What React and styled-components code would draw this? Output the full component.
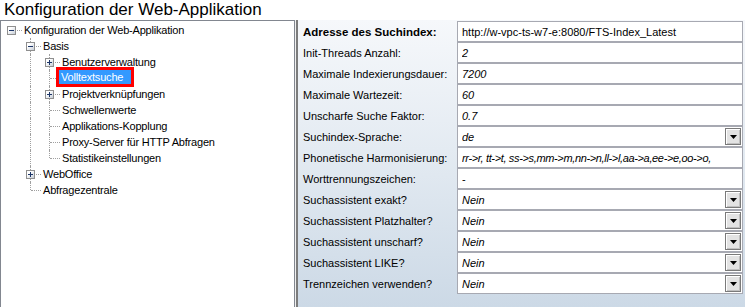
import React from "react";
import styled, { createGlobalStyle } from "styled-components";

const GlobalStyle = createGlobalStyle`
  body {
    margin: 0;
    background: #ffffff;
    font-family: "Liberation Sans", Arial, sans-serif;
  }
`;

const Page = styled.div`
  width: 745px;
  height: 307px;
  display: flex;
  flex-direction: column;
  overflow: hidden;
  background: #ffffff;
`;

const Title = styled.h1`
  margin: 0;
  height: 20px;
  padding-left: 4px;
  font-size: 17px;
  line-height: 19px;
  font-weight: normal;
  color: #000;
  white-space: nowrap;
`;

const Main = styled.div`
  flex: 1;
  display: flex;
  min-height: 0;
`;

const TreePanel = styled.div`
  width: 295px;
  box-sizing: border-box;
  border: 1px solid #828790;
  border-bottom: none;
  background: #ffffff;
  padding-top: 1px;
  font-size: 11px;
  letter-spacing: -0.2px;
`;

const Splitter = styled.div`
  width: 3px;
  border-left: 1px solid #f0f0f0;
  box-sizing: border-box;
  background: #7c7c7c;
`;

const PropPanel = styled.div`
  flex: 1;
  background: linear-gradient(to bottom, #f6f8fb 0%, #e4ebf2 45%, #ccd9e6 100%);
  padding-right: 2px;
  padding-top: 1px;
  display: grid;
  grid-template-columns: 159px 1fr;
  grid-auto-rows: 21px;
  align-content: start;
  font-size: 11px;
`;

/* ---------- tree ---------- */

const TreeRow = styled.div`
  display: flex;
  height: 16px;
  align-items: stretch;
  padding-left: 1px;
`;

const Guide = styled.div`
  width: 19px;
  flex: none;
  position: relative;
  &::before {
    content: "";
    display: ${({ $line }) => ($line ? "block" : "none")};
    position: absolute;
    left: 9px;
    top: 0;
    bottom: 0;
    border-left: 1px dotted #a0a0a0;
  }
`;

const Connector = styled.div`
  width: 19px;
  flex: none;
  position: relative;
  &::before {
    content: "";
    display: ${({ $up }) => ($up ? "block" : "none")};
    position: absolute;
    left: 9px;
    top: 0;
    height: ${({ $down }) => ($down ? "16px" : "8px")};
    border-left: 1px dotted #a0a0a0;
  }
  &::after {
    content: "";
    position: absolute;
    left: 10px;
    top: 8px;
    width: 10px;
    border-top: 1px dotted #a0a0a0;
  }
`;

const ExpandBox = styled.span`
  position: absolute;
  left: 5px;
  top: 4px;
  width: 9px;
  height: 9px;
  box-sizing: border-box;
  border: 1px solid #8f8f8f;
  background: linear-gradient(to bottom right, #ffffff 30%, #c6cdd6 100%);
  z-index: 1;
  &::before {
    content: "";
    position: absolute;
    left: 1px;
    top: 3px;
    width: 5px;
    height: 1px;
    background: #1c3568;
  }
  &::after {
    content: "";
    display: ${({ $open }) => ($open ? "none" : "block")};
    position: absolute;
    left: 3px;
    top: 1px;
    width: 1px;
    height: 5px;
    background: #1c3568;
  }
`;

const NodeLabel = styled.span`
  margin-left: 3px;
  line-height: 16px;
  white-space: nowrap;
  color: #000;
`;

const SelectedLabel = styled.span`
  position: relative;
  z-index: 2;
  margin-left: -3px;
  margin-top: -3px;
  height: 20px;
  box-sizing: border-box;
  border: 3px solid #ff0000;
  background: #3399ff;
  color: #ffffff;
  padding: 0 8px 0 2px;
  line-height: 14px;
  white-space: nowrap;
`;

/* ---------- property grid ---------- */

const Label = styled.div`
  padding-left: 5px;
  display: flex;
  align-items: center;
  white-space: nowrap;
  color: #000;
  font-weight: ${({ $bold }) => ($bold ? "bold" : "normal")};
  font-size: ${({ $bold }) => ($bold ? "11.5px" : "11px")};
`;

const ValueCell = styled.div`
  box-sizing: border-box;
  border: 1px solid #a7a9b2;
  background: #ffffff;
  display: flex;
  align-items: center;
  padding-left: 4px;
  padding-right: 1px;
  overflow: hidden;
  white-space: nowrap;
`;

const ValueText = styled.span`
  flex: 1;
  overflow: hidden;
  font-style: ${({ $italic }) => ($italic ? "italic" : "normal")};
  letter-spacing: ${({ $tight }) => ($tight ? "-0.35px" : "normal")};
  color: #000;
`;

const DropButton = styled.span`
  flex: none;
  width: 16px;
  height: 17px;
  box-sizing: border-box;
  border: 1px solid #7a7a7a;
  box-shadow: inset 1px 1px 0 #ffffff, inset -1px -1px 0 #c0c0c0;
  background: #e3e3e3;
  display: flex;
  align-items: center;
  justify-content: center;
`;

const tree = [
  { text: "Konfiguration der Web-Applikation", box: "open", guides: [], up: false, down: false },
  { text: "Basis", box: "open", guides: [false], up: true, down: true },
  { text: "Benutzerverwaltung", box: "closed", guides: [false, true], up: true, down: true },
  { text: "Volltextsuche", selected: true, guides: [false, true], up: true, down: true },
  { text: "Projektverknüpfungen", box: "closed", guides: [false, true], up: true, down: true },
  { text: "Schwellenwerte", guides: [false, true], up: true, down: true },
  { text: "Applikations-Kopplung", guides: [false, true], up: true, down: true },
  { text: "Proxy-Server für HTTP Abfragen", guides: [false, true], up: true, down: true },
  { text: "Statistikeinstellungen", guides: [false, true], up: true, down: false },
  { text: "WebOffice", box: "closed", guides: [false], up: true, down: true },
  { text: "Abfragezentrale", guides: [false], up: true, down: false },
];

const props = [
  { label: "Adresse des Suchindex:", value: "http://w-vpc-ts-w7-e:8080/FTS-Index_Latest", bold: true },
  { label: "Init-Threads Anzahl:", value: "2", italic: true },
  { label: "Maximale Indexierungsdauer:", value: "7200", italic: true },
  { label: "Maximale Wartezeit:", value: "60", italic: true },
  { label: "Unscharfe Suche Faktor:", value: "0.7", italic: true },
  { label: "Suchindex-Sprache:", value: "de", italic: true, drop: true },
  {
    label: "Phonetische Harmonisierung:",
    value: "rr->r, tt->t, ss->s,mm->m,nn->n,ll->l,aa->a,ee->e,oo->o,",
    italic: true,
    tight: true,
  },
  { label: "Worttrennungszeichen:", value: "-" },
  { label: "Suchassistent exakt?", value: "Nein", italic: true, drop: true },
  { label: "Suchassistent Platzhalter?", value: "Nein", italic: true, drop: true },
  { label: "Suchassistent unscharf?", value: "Nein", italic: true, drop: true },
  { label: "Suchassistent LIKE?", value: "Nein", italic: true, drop: true },
  { label: "Trennzeichen verwenden?", value: "Nein", italic: true, drop: true },
];

const Arrow = () => (
  <svg width="7" height="4" viewBox="0 0 7 4">
    <path d="M0 0H7L3.5 4Z" fill="#000" />
  </svg>
);

export default function App() {
  return (
    <Page>
      <GlobalStyle />
      <Title>Konfiguration der Web-Applikation</Title>
      <Main>
        <TreePanel>
          {tree.map((n, i) => (
            <TreeRow key={i}>
              {n.guides.map((g, j) => (
                <Guide key={j} $line={g} />
              ))}
              <Connector $up={n.up} $down={n.down}>
                {n.box && <ExpandBox $open={n.box === "open"} />}
              </Connector>
              {n.selected ? (
                <SelectedLabel>{n.text}</SelectedLabel>
              ) : (
                <NodeLabel>{n.text}</NodeLabel>
              )}
            </TreeRow>
          ))}
        </TreePanel>
        <Splitter />
        <PropPanel>
          {props.map((p, i) => (
            <React.Fragment key={i}>
              <Label $bold={p.bold}>{p.label}</Label>
              <ValueCell>
                <ValueText $italic={p.italic} $tight={p.tight}>
                  {p.value}
                </ValueText>
                {p.drop && (
                  <DropButton>
                    <Arrow />
                  </DropButton>
                )}
              </ValueCell>
            </React.Fragment>
          ))}
        </PropPanel>
      </Main>
    </Page>
  );
}
